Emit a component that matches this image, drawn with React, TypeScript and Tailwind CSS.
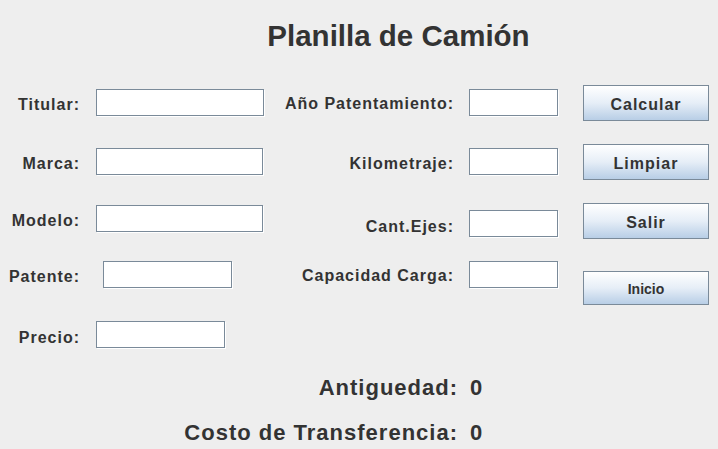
import React from "react";

const Field: React.FC<{ w: string }> = ({ w }) => (
  <div className={`${w} h-[27px] bg-white border border-[#7a8a99] shadow-[1px_1px_0_#ffffff]`} />
);

const Btn: React.FC<{ label: string; small?: boolean }> = ({ label, small }) => (
  <button
    className={`w-[126px] pt-[3px] ${small ? "h-[34px] text-[14px]" : "h-[36px] text-[16px] tracking-[1px]"} border border-[#7a8a99] bg-linear-to-b from-white via-[#e6eef7] to-[#b8cee6] font-bold text-[#333333]`}
  >
    {label}
  </button>
);

const App: React.FC<{}> = () => {
  const left = [
    { label: "Titular:", w: "w-[168px]", ml: "ml-[16px]", mt: "mt-[4px]", off: "mt-[4px]" },
    { label: "Marca:", w: "w-[167px]", ml: "ml-[16px]", mt: "mt-[32px]", off: "mt-[4px]" },
    { label: "Modelo:", w: "w-[167px]", ml: "ml-[16px]", mt: "mt-[30px]", off: "mt-[5px]" },
    { label: "Patente:", w: "w-[129px]", ml: "ml-[23px]", mt: "mt-[29px]", off: "mt-[5px]" },
    { label: "Precio:", w: "w-[129px]", ml: "ml-[16px]", mt: "mt-[33px]", off: "mt-[6px]" },
  ];
  const middle = [
    { label: "Año Patentamiento:", mt: "mt-[4px]", off: "mt-[3px]" },
    { label: "Kilometraje:", mt: "mt-[32px]", off: "mt-[4px]" },
    { label: "Cant.Ejes:", mt: "mt-[35px]", off: "mt-[6px]" },
    { label: "Capacidad Carga:", mt: "mt-[24px]", off: "mt-[3px]" },
  ];

  return (
    <div className="w-[718px] h-[449px] bg-[#eeeeee] overflow-hidden font-['Liberation_Sans',Arial,sans-serif] text-[#333333]">
      <h1 className="pt-[18px] pl-[79px] text-center text-[29.5px] leading-[36px] font-bold">
        Planilla de Camión
      </h1>

      <div className="flex mt-[31px]">
        <div className="w-[270px] flex flex-col">
          {left.map((row) => (
            <div key={row.label} className={`flex items-center h-[27px] ${row.mt}`}>
              <span className={`w-[80px] ${row.off} text-right text-[16px] font-bold tracking-[1px]`}>
                {row.label}
              </span>
              <div className={row.ml}>
                <Field w={row.w} />
              </div>
            </div>
          ))}
        </div>

        <div className="w-[288px] flex flex-col">
          {middle.map((row) => (
            <div key={row.label} className={`flex items-center h-[27px] ${row.mt}`}>
              <span className={`w-[184px] ${row.off} text-right text-[16px] font-bold tracking-[1px] whitespace-nowrap`}>
                {row.label}
              </span>
              <div className="ml-[15px]">
                <Field w="w-[89px]" />
              </div>
            </div>
          ))}
        </div>

        <div className="ml-[25px] flex flex-col">
          <Btn label="Calcular" />
          <div className="mt-[23px]">
            <Btn label="Limpiar" />
          </div>
          <div className="mt-[23px]">
            <Btn label="Salir" />
          </div>
          <div className="mt-[32px]">
            <Btn label="Inicio" small />
          </div>
        </div>
      </div>

      <div className="mt-[27px] flex flex-col gap-[19px] text-[22px] leading-[26px] font-bold tracking-[1px]">
        <div className="flex">
          <span className="w-[458px] text-right">Antiguedad:</span>
          <span className="ml-[12px]">0</span>
        </div>
        <div className="flex">
          <span className="w-[458px] text-right whitespace-nowrap">Costo de Transferencia:</span>
          <span className="ml-[12px]">0</span>
        </div>
      </div>
    </div>
  );
};

export default App;
